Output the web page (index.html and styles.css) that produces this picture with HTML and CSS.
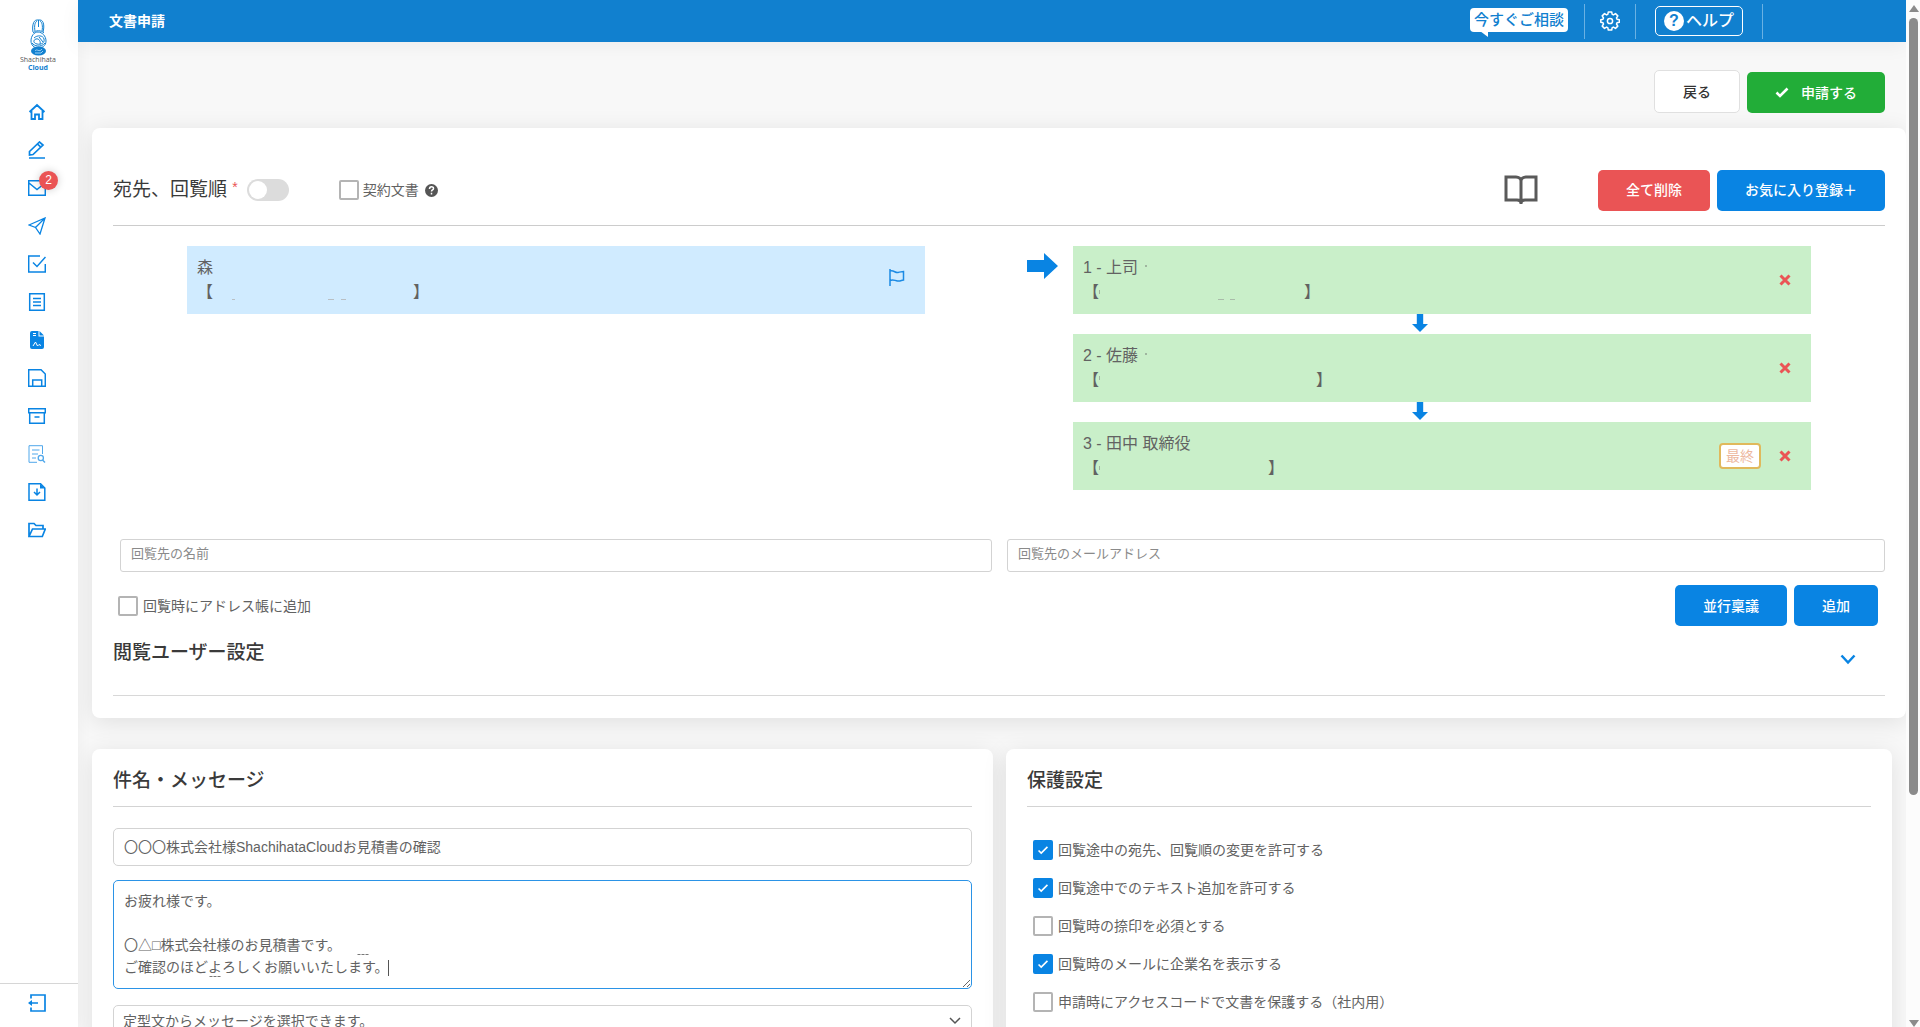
FILE: index.html
```html
<!DOCTYPE html>
<html lang="ja">
<head>
<meta charset="utf-8">
<title>文書申請 - Shachihata Cloud</title>
<link rel="stylesheet" href="styles.css">
</head>
<body>
<div class="app">
  <nav class="sidebar" aria-label="メニュー">
    <a class="logo" href="#" aria-label="Shachihata Cloud">
      <svg width="18" height="37" viewBox="0 0 18 37" fill="none" stroke="#1180cf" stroke-width="1">
        <path d="M4 13C3 8 4 1 8 1h3c4 0 4.500 7 3 12M6 12C5 7 6 3 8 2M13 12c1-5 0-9-2-10M9.500 1v7"/>
        <path d="M4 14c3-3 8-3 11 0M2 22c0-5 3-9 7-9s8 4 8 9-4 7-8 7-7-3-7-7z"/>
        <path d="M5 19c3-3 9-3 10 1s-3 6-7 5-4-4-1-5 5 3 4 5M10 18l4 5M3 24c2 3 9 5 13 0"/>
        <ellipse cx="9.500" cy="32" rx="7.500" ry="4.500" fill="#1180cf" stroke="none"/>
        <path d="M6 32c2-3 4 2 7-2M6 34h6l2-2" stroke="#9bd0f5"/>
      </svg>
      <span class="logo-name">Shachihata</span>
      <span class="logo-cloud">Cloud</span>
    </a>
    <ul class="menu">
      <li><a href="#" aria-label="ホーム"><svg viewBox="0 0 18 18"><path d="M1.500 9L9 2l7.500 7M3.500 8v8H7v-4.500h4V16h3.500V8" stroke-width="1.800"/></svg></a></li>
      <li><a href="#" aria-label="作成"><svg viewBox="0 0 18 18"><path d="M1.500 14v-3.500L11.500 1 15 4 5 13.500zM9.500 3l3.300 3.200M1 17h16" stroke-width="1.700"/></svg></a></li>
      <li><a href="#" aria-label="受信 2件"><svg viewBox="0 0 18 18"><path d="M.7 1.700h16.600v14.600H.7zM1 4l8 6.500L17 4" stroke-width="1.500"/></svg><span class="count">2</span></a></li>
      <li><a href="#" aria-label="送信"><svg viewBox="0 0 18 18"><path d="M1 8L17 1l-5 16-4.500-6.500zM7.500 10.500L17 1" stroke-width="1.300"/></svg></a></li>
      <li><a href="#" aria-label="完了"><svg viewBox="0 0 18 18"><path d="M12 1H.7v16h16.600V9M5 7.500l4 4L17.500 2" stroke-width="1.500"/></svg></a></li>
      <li><a href="#" aria-label="文書"><svg viewBox="0 0 18 18"><path d="M1.700.7h14.600v16.600H1.700zM5 5.500h8M5 9h8M5 12.500h8" stroke-width="1.500"/></svg></a></li>
      <li><a href="#" aria-label="契約"><svg viewBox="0 0 18 18"><path fill="#0984e3" stroke="none" d="M4 0h6.500v5.500H16V16a2 2 0 0 1-2 2H4a2 2 0 0 1-2-2V2a2 2 0 0 1 2-2zM11.500 0L16 4.500h-4.500z"/><path d="M5 2.500h3M5 4.500h3M5 15l2.500-4 2 4 1.500-1.500 2 1" stroke="#fff"/></svg></a></li>
      <li><a href="#" aria-label="下書き"><svg viewBox="0 0 18 18"><path d="M.7.700H13L17.300 5v12.300H.7zM4.700 17v-6h9v6" stroke-width="1.500"/></svg></a></li>
      <li><a href="#" aria-label="保管"><svg viewBox="0 0 18 18"><path d="M.7 1.700h16.600v4H.7zM1.700 6v10.300h14.600V6M6.500 10h5" stroke-width="1.500"/></svg></a></li>
      <li><a class="dim" href="#" aria-label="検索"><svg viewBox="0 0 18 18"><path d="M9 17.300H1V.700h13.500V9M4 5h7.500M4 9h6M4 13h4"/><circle cx="12.800" cy="13" r="2.600" stroke-width="1.300"/><path d="M14.500 15l2.500 2.500" stroke-width="1.400"/></svg></a></li>
      <li><a href="#" aria-label="ダウンロード"><svg viewBox="0 0 18 18"><path d="M1 .700h11.500L16.800 5v12.300H1zM9 5.500v6M6 9l3 3 3-3" stroke-width="1.500"/><path d="M12 .700V5.500h5z" fill="#0984e3" stroke="none"/></svg></a></li>
      <li><a href="#" aria-label="フォルダー"><svg viewBox="0 0 18 18"><path d="M1 15.500V2.500h5L8 4.500h7V8M1 15.500L4.500 8H17.300l-3 7.500z" stroke-width="1.700"/></svg></a></li>
    </ul>
    <div class="exit"><a href="#" aria-label="ログアウト"><svg viewBox="0 0 18 18"><path d="M3 4.500V1h14v16H3v-3.500M1.500 9H10" stroke-width="1.700"/><path d="M0 9l4-3v6z" fill="#0984e3" stroke="none"/></svg></a></div>
  </nav>

  <div class="page">
    <header class="topbar">
      <h1>文書申請</h1>
      <a class="consult" href="#">今すぐご相談</a>
      <div class="slot gear"><button type="button" aria-label="設定">
        <svg width="20" height="20" viewBox="0 0 20 20" fill="none" stroke="#fff" stroke-width="1.500" stroke-linejoin="round"><path d="M8.300 1h3.400l.5 2.400 1.200.5 2.100-1.300 2.300 2.300-1.300 2.100.5 1.200 2.400.5v2.600l-2.400.5-.5 1.200 1.300 2.100-2.300 2.300-2.100-1.300-1.200.5-.5 2.400H8.300l-.5-2.400-1.200-.5-2.100 1.300-2.300-2.300 1.300-2.100-.5-1.200L.8 11.300V8.700L3 8.200 3.500 7 2.200 4.900l2.300-2.300 2.100 1.300 1.200-.5z"/><circle cx="10" cy="10" r="2.600"/></svg>
      </button></div>
      <div class="slot help"><button type="button"><span class="q">?</span>ヘルプ</button></div>
    </header>

    <main>
      <div class="actions">
        <button type="button" class="btn back">戻る</button>
        <button type="button" class="btn green"><svg width="14" height="11" viewBox="0 0 14 11"><path d="M1.500 5.500l3.500 3.500L12.500 1.500" fill="none" stroke="#fff" stroke-width="2.600"/></svg>申請する</button>
      </div>

      <section class="card route">
        <div class="route-head">
          <h2>宛先、回覧順 <em>*</em></h2>
          <input class="switch" type="checkbox" aria-label="回覧順">
          <label class="tick contract"><input type="checkbox">契約文書</label>
          <svg class="tip" width="13" height="13" viewBox="0 0 13 13"><circle cx="6.500" cy="6.500" r="6.500" fill="#555"/><path d="M4.500 5c0-3 4-2.800 4-.6 0 1.600-2 1.500-2 3.100M6.500 8.800v1.700" fill="none" stroke="#fff" stroke-width="1.500"/></svg>
          <button type="button" class="book" aria-label="アドレス帳"><svg width="34" height="30" viewBox="0 0 34 30" fill="none" stroke="#5a5a5a" stroke-width="3"><path d="M17 29V6c0-2-2-4-5-4H2v23h11c3 0 4 1 4 3 0-2 1-3 4-3h11V2H22c-3 0-5 2-5 4"/></svg></button>
          <button type="button" class="btn red">全て削除</button>
          <button type="button" class="btn blue favorite">お気に入り登録＋</button>
        </div>

        <div class="flow">
          <div class="half">
            <div class="person sender">
              <div><p>森</p><p>【<svg class="gap" width="200" height="16"><path d="M19 14.500h3M115 14.500h6M128 14.500h5" stroke="#b9bfc4"/></svg>】</p></div>
              <svg class="flag" width="17" height="17" viewBox="0 0 17 17" fill="none" stroke="#1b8ae4" stroke-width="1.500"><path d="M2 0v17M2 2c4-1 5 2 8 1.500s4-1 5.500-1V11c-2 0-3 1.500-6 1S5 10 2 11.500"/></svg>
            </div>
          </div>
          <div class="half">
            <svg class="next" width="31" height="26" viewBox="0 0 31 26"><path d="M0 7h17V0l14 13-14 13v-7H0z" fill="#0984e3"/></svg>
            <ol>
              <li class="person"><div><p>1 - 上司<i class="dot"></i></p><p>【<svg class="gap" width="205" height="16"><path d="M.5 5v4" stroke="#9fb59f"/><path d="M119 14.500h6M131 14.500h5" stroke="#a9bba9"/></svg>】</p></div><button type="button" class="del" aria-label="削除"><svg width="12" height="12" viewBox="0 0 12 12"><path d="M1.500 1.500l9 9M10.500 1.500l-9 9"/></svg></button></li>
              <li class="person"><div><p>2 - 佐藤<i class="dot"></i></p><p>【<svg class="gap" width="217" height="16"><path d="M.5 3v4" stroke="#9fb59f"/></svg>】</p></div><button type="button" class="del" aria-label="削除"><svg width="12" height="12" viewBox="0 0 12 12"><path d="M1.500 1.500l9 9M10.500 1.500l-9 9"/></svg></button></li>
              <li class="person"><div><p>3 - 田中 取締役</p><p>【<svg class="gap" width="169" height="16"><path d="M.5 5v4" stroke="#9fb59f"/></svg>】</p></div><span class="last">最終</span><button type="button" class="del" aria-label="削除"><svg width="12" height="12" viewBox="0 0 12 12"><path d="M1.500 1.500l9 9M10.500 1.500l-9 9"/></svg></button></li>
            </ol>
          </div>
        </div>

        <div class="adder">
          <input type="text" aria-label="回覧先の名前" placeholder="回覧先の名前">
          <input type="email" aria-label="回覧先のメールアドレス" placeholder="回覧先のメールアドレス">
        </div>
        <div class="add-row">
          <label class="tick"><input type="checkbox">回覧時にアドレス帳に追加</label>
          <button type="button" class="btn blue">並行稟議</button>
          <button type="button" class="btn blue">追加</button>
        </div>
        <div class="viewers">
          <h2>閲覧ユーザー設定</h2>
          <button type="button" aria-label="開く"><svg width="16" height="11" viewBox="0 0 16 11"><path d="M1.500 1.500L8 8.500l6.500-7" fill="none" stroke="#0984e3" stroke-width="2.500"/></svg></button>
        </div>
      </section>

      <div class="columns">
        <section class="card message">
          <h2>件名・メッセージ</h2>
          <input type="text" aria-label="件名" value="〇〇〇株式会社様ShachihataCloudお見積書の確認">
          <div class="body">
            <textarea aria-label="メッセージ">お疲れ様です。

〇△□株式会社様のお見積書です。
ご確認のほどよろしくお願いいたします。</textarea>
            <svg class="marks" width="280" height="100"><path d="M244.500 74.500h11M96.500 96.500h11" stroke="#777" stroke-dasharray="3 1"/><path d="M275.500 80v16" stroke="#555"/></svg>
          </div>
          <select aria-label="定型文"><option>定型文からメッセージを選択できます。</option></select>
        </section>
        <section class="card protect">
          <h2>保護設定</h2>
          <div class="options">
            <label class="tick"><input type="checkbox" checked>回覧途中の宛先、回覧順の変更を許可する</label>
            <label class="tick"><input type="checkbox" checked>回覧途中でのテキスト追加を許可する</label>
            <label class="tick"><input type="checkbox">回覧時の捺印を必須とする</label>
            <label class="tick"><input type="checkbox" checked>回覧時のメールに企業名を表示する</label>
            <label class="tick"><input type="checkbox">申請時にアクセスコードで文書を保護する（社内用）</label>
          </div>
        </section>
      </div>
    </main>
  </div>
  <div class="scrollbar" aria-hidden="true"><i class="up"></i><i class="thumb"></i><i class="down"></i></div>
</div>
</body>
</html>
```
FILE: styles.css
```css
* { box-sizing: border-box; }
body {
  margin: 0;
  font-family: "Liberation Sans", "Noto Sans CJK JP", sans-serif;
  font-size: 14px;
  line-height: 20px;
  color: #626262;
}
h1, h2, p, ul, ol { margin: 0; padding: 0; list-style: none; }
svg { display: block; }
a { color: inherit; text-decoration: none; }
button, input, select, textarea { font: inherit; color: inherit; margin: 0; }
button { border: 0; padding: 0; background: none; }

.app { display: flex; height: 100vh; overflow: hidden; }

/* side menu */
.sidebar { position: relative; z-index: 1; flex: 0 0 78px; display: flex; flex-direction: column; background: #fff; box-shadow: 0 0 15px #0000000d; }
.logo { display: flex; flex-direction: column; align-items: center; padding: 19px 2px 21px 0; }
.logo-name { font: 7px/8px "Open Sans", sans-serif; color: #555; }
.logo-cloud { font: bold 7px/8px "Open Sans", sans-serif; color: #1180cf; }
.menu { flex: 1; }
.menu a, .exit a {
  position: relative;
  display: flex;
  align-items: center;
  justify-content: center;
  height: 38px;
  padding-right: 4px;
}
.menu svg, .exit svg { width: 18px; height: 18px; fill: none; stroke: #0984e3; }
.menu .dim { opacity: .7; }
.count {
  position: absolute;
  top: 2px;
  left: 39px;
  width: 19px;
  height: 19px;
  border-radius: 50%;
  background: #ea5455;
  color: #fff;
  font-size: 12px;
  line-height: 19px;
  text-align: center;
  box-shadow: 0 0 8px #0003;
}
.exit { height: 44px; border-top: 1px solid #d6d6d6; }

/* top bar */
.page { flex: 1; min-width: 0; background: #f8f8f8; }
.topbar {
  position: relative;
  z-index: 1;
  display: flex;
  align-items: center;
  height: 42px;
  padding: 0 143px 0 31px;
  background: #1180cf;
  color: #fff;
  box-shadow: 0 4px 20px #0000000d;
}
.topbar h1 { flex: 1; font-size: 14px; font-weight: 700; }
.consult {
  position: relative;
  height: 24px;
  margin: 0 16px 2px 0;
  padding: 0 4px;
  border-radius: 4px;
  background: #fff;
  color: #1180cf;
  font-size: 15px;
  font-weight: 500;
  line-height: 24px;
}
.consult::after {
  content: "";
  position: absolute;
  left: 10px;
  top: 23px;
  border-left: 8px solid transparent;
  border-top: 6px solid #fff;
}
.slot {
  display: flex;
  align-items: center;
  justify-content: center;
  height: 35px;
  border-left: 1px solid #6ab1e3;
}
.gear { width: 51px; }
.help { width: 128px; border-right: 1px solid #6ab1e3; }
.help button {
  display: flex;
  align-items: center;
  gap: 2px;
  height: 30px;
  padding: 0 8px;
  border: 1px solid #fff;
  border-radius: 5px;
  font-size: 16px;
  font-weight: 500;
}
.q {
  width: 20px;
  height: 20px;
  border-radius: 50%;
  background: #fff;
  color: #1180cf;
  font-weight: 700;
  line-height: 20px;
  text-align: center;
}

/* shared pieces */
main { padding: 28px 0 0 14px; }
.btn {
  height: 41px;
  padding: 0 28px;
  border-radius: 5px;
  color: #fff;
  font-weight: 500;
}
.blue { background: #0984e3; }
.red { background: #ea5455; }
.green { display: flex; align-items: center; gap: 12px; background: #22ad38; }
.back { height: 43px; border: 1px solid #e0e0e0; background: #fff; color: #333; }
.actions { display: flex; justify-content: flex-end; align-items: flex-end; gap: 7px; padding-right: 21px; margin-bottom: 15px; }
.card { padding: 0 21px; border-radius: 8px; background: #fff; box-shadow: 0 4px 25px #0000001a; }
h2 { font-size: 19px; line-height: 28px; font-weight: 500; color: #3a3a3a; }
.tick { display: flex; align-items: center; gap: 5px; }
.tick input {
  appearance: none;
  flex: none;
  width: 20px;
  height: 20px;
  border: 2px solid #b4b4b4;
  border-radius: 2px;
  background: #fff;
}
.tick input:checked {
  border-color: #0984e3;
  background: #0984e3 url("data:image/svg+xml,%3Csvg xmlns='http://www.w3.org/2000/svg' viewBox='0 0 18 18'%3E%3Cpath d='M4 9.500l3 3 7-7' fill='none' stroke='white' stroke-width='1.800'/%3E%3C/svg%3E");
}
input[type="text"], input[type="email"], select, textarea {
  display: block;
  width: 100%;
  border: 1px solid #d3d3d3;
  border-radius: 5px;
  background: #fff;
}
::placeholder { color: #8a8a8a; opacity: 1; }

/* route */
.route { padding-bottom: 22px; }
.route-head { display: flex; align-items: center; height: 98px; padding-top: 27px; border-bottom: 1px solid #ccc; }
.route-head h2 { font-weight: 400; }
.route-head em { color: #ea5455; font-size: 14px; font-style: normal; line-height: 14px; vertical-align: 4px; }
.switch {
  appearance: none;
  width: 42px;
  height: 22px;
  margin-left: 9px;
  padding: 2px;
  border-radius: 11px;
  background: #dcdcdc;
}
.switch::before { content: ""; display: block; width: 18px; height: 18px; border-radius: 50%; background: #fff; }
.contract { margin-left: 50px; gap: 4px; }
.tip { margin-left: 6px; }
.book { margin: 0 60px 0 auto; }
.favorite { margin-left: 7px; }
.flow { display: grid; grid-template-columns: 1fr 1fr; padding: 20px 0 29px; }
.half { position: relative; padding: 0 74px; }
.next { position: absolute; left: 28px; top: 7px; }
.person {
  position: relative;
  display: flex;
  align-items: center;
  height: 68px;
  margin-bottom: 20px;
  padding: 0 20px 0 10px;
  background: #c9efc9;
  font-size: 16px;
  line-height: 24px;
}
.person > div { flex: 1; }
.sender { background: #d0ebff; }
.flag { margin-bottom: 6px; }
.gap { display: inline-block; vertical-align: -4px; }
.dot { display: inline-block; width: 2px; height: 2px; margin-left: 7px; vertical-align: 6px; background: #9fb59f; }
.person:not(:last-child)::after {
  content: "";
  position: absolute;
  left: calc(50% - 30px);
  top: 68px;
  width: 16px;
  height: 18px;
  background: #0984e3;
  clip-path: polygon(30% 0, 70% 0, 70% 55%, 100% 55%, 50% 100%, 0 55%, 30% 55%);
}
.del svg { fill: none; stroke: #ea5455; stroke-width: 3px; }
.last {
  height: 26px;
  margin-right: 18px;
  padding: 0 5px;
  border: 2px solid #e0b95c;
  border-radius: 4px;
  background: #fff;
  color: #edb8a0;
  font-size: 14px;
  line-height: 22px;
}
.adder { display: grid; grid-template-columns: 872fr 878fr; gap: 15px; padding-left: 7px; }
.adder input { height: 33px; padding: 0 10px 4px; border-radius: 3px; font-size: 13px; }
.add-row { display: flex; align-items: center; gap: 7px; padding: 13px 7px 0 5px; }
.add-row .tick { flex: 1; }
.viewers { display: flex; align-items: center; justify-content: space-between; height: 70px; padding: 0 29px 16px 0; border-bottom: 1px solid #d8d8d8; }
.viewers button { padding-top: 14px; }

/* lower cards */
.columns { display: grid; grid-template-columns: 901fr 886fr; gap: 13px; margin: 31px 14px 0 0; }
.columns .card { padding-bottom: 24px; }
.columns h2 { height: 58px; padding-top: 18px; border-bottom: 1px solid #d3d3d3; }
.message input { height: 38px; margin: 21px 0 14px; padding: 0 10px 2px; }
.body { position: relative; }
.body textarea { height: 109px; padding: 9px 10px; border-color: #2b93e6; line-height: 22px; resize: vertical; }
.marks { position: absolute; left: 0; top: 0; }
.message select {
  appearance: none;
  height: 38px;
  margin-top: 16px;
  padding: 0 9px 6px;
  background: #fff url("data:image/svg+xml,%3Csvg xmlns='http://www.w3.org/2000/svg' width='12' height='8'%3E%3Cpath d='M1 1l5 5 5-5' fill='none' stroke='%23555' stroke-width='1.500'/%3E%3C/svg%3E") no-repeat right 10px top 11px;
}
.options { display: grid; grid-auto-rows: 38px; padding: 24px 6px; }

/* page scrollbar */
.scrollbar { flex: 0 0 14px; display: flex; flex-direction: column; align-items: center; background: #fcfcfc; padding: 5px 0 0 1px; z-index: 1; }
.scrollbar i { display: block; }
.up { border: 5px solid transparent; border-top: 0; border-bottom: 7px solid #8b8b8b; }
.thumb { width: 9px; height: 76%; margin: 6px 0 auto; border-radius: 5px; background: #8b8b8b; }
.down { border: 5px solid transparent; border-bottom: 0; border-top: 7px solid #8b8b8b; }
```
